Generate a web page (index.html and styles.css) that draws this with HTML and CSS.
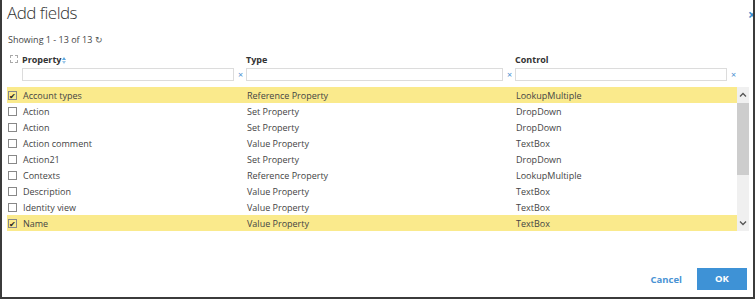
FILE: index.html
```html
<!DOCTYPE html>
<html>
<head>
<meta charset="utf-8">
<title>Add fields</title>
<link rel="stylesheet" href="styles.css">
</head>
<body>
    <div class="dialog">
        <div class="title">
            <h1>Add fields</h1>
            <span class="close">×</span>
        </div>
        <p class="count">Showing 1 - 13 of 13 <span class="refresh">↻</span></p>

        <!-- header begin -->
        <div class="row head">
            <span class="chk dotted"></span>
            <span class="col c1">Property<span class="sort"><b class="up"></b><b class="down"></b></span></span>
            <span class="col c2">Type</span>
            <span class="col c3">Control</span>
        </div>
        <div class="row filters">
            <span class="chk none"></span>
            <span class="col c1"><input type="text"><i>×</i></span>
            <span class="col c2"><input type="text"><i>×</i></span>
            <span class="col c3"><input type="text"><i>×</i></span>
        </div>
        <!-- header end -->

        <!-- list begin -->
        <div class="list">
            <div class="rows">
                <div class="row item on"><span class="chk">✔</span><span class="col c1">Account types</span><span class="col c2">Reference Property</span><span class="col c3">LookupMultiple</span></div>
                <div class="row item"><span class="chk"></span><span class="col c1">Action</span><span class="col c2">Set Property</span><span class="col c3">DropDown</span></div>
                <div class="row item"><span class="chk"></span><span class="col c1">Action</span><span class="col c2">Set Property</span><span class="col c3">DropDown</span></div>
                <div class="row item"><span class="chk"></span><span class="col c1">Action comment</span><span class="col c2">Value Property</span><span class="col c3">TextBox</span></div>
                <div class="row item"><span class="chk"></span><span class="col c1">Action21</span><span class="col c2">Set Property</span><span class="col c3">DropDown</span></div>
                <div class="row item"><span class="chk"></span><span class="col c1">Contexts</span><span class="col c2">Reference Property</span><span class="col c3">LookupMultiple</span></div>
                <div class="row item"><span class="chk"></span><span class="col c1">Description</span><span class="col c2">Value Property</span><span class="col c3">TextBox</span></div>
                <div class="row item"><span class="chk"></span><span class="col c1">Identity view</span><span class="col c2">Value Property</span><span class="col c3">TextBox</span></div>
                <div class="row item on"><span class="chk">✔</span><span class="col c1">Name</span><span class="col c2">Value Property</span><span class="col c3">TextBox</span></div>
            </div>
            <div class="scroll">
                <span class="arr">
                    <svg width="8" height="6" viewBox="0 0 8 6"><path d="M1 4.5 L4 1.5 L7 4.5" fill="none" stroke="#555" stroke-width="1.3"/></svg>
                </span>
                <span class="thumb"></span>
                <span class="track"></span>
                <span class="arr">
                    <svg width="8" height="6" viewBox="0 0 8 6"><path d="M1 1.5 L4 4.5 L7 1.5" fill="none" stroke="#555" stroke-width="1.3"/></svg>
                </span>
            </div>
        </div>
        <!-- list end -->

        <div class="foot">
            <a href="javascript:;" class="cancel">Cancel</a>
            <a href="javascript:;" class="ok">OK</a>
        </div>
    </div>
</body>
</html>
```

FILE: styles.css
```css
* { margin: 0; padding: 0; box-sizing: border-box; }
body { font-family: "Open Sans", "Liberation Sans", sans-serif; color: #444; background: #fff; }

.dialog { width: 755px; height: 299px; border: 2px solid #3b3b3b; border-top: none; padding: 0 0 0 5px; overflow: hidden; }

.title { display: flex; justify-content: space-between; align-items: flex-start; height: 34px; }
.title h1 { font-size: 17px; font-weight: 300; letter-spacing: -0.5px; color: #333; line-height: 24px; padding: 1px 0 0 0; }
.title .close { color: #3a8fd0; font-size: 14px; font-weight: bold; line-height: 14px; margin-top: 8px; margin-right: -3px; }

.count { font-size: 9px; line-height: 12px; padding-left: 1px; color: #444; height: 18px; }
.count .refresh { font-size: 9px; color: #555; }

.row { display: flex; align-items: center; font-size: 9px; }
.chk { width: 9px; height: 9px; border: 1px solid #888; margin: 0 6px 0 1px; font-size: 8px; line-height: 8px; text-align: center; color: #222; flex: none; }
.chk.dotted { border: 1px dashed #aaa; margin-left: 3px; margin-right: 4px; width: 8px; height: 8px; }
.chk.none { border: none; }
.col { flex: none; }
.c1 { width: 224px; }
.c2 { width: 269px; }
.c3 { width: 222px; }

.head { height: 14px; font-weight: bold; color: #333; }
.head .sort { display: inline-flex; flex-direction: column; gap: 1px; vertical-align: 3px; margin-left: 1px; }
.head .sort b { display: block; width: 0; height: 0; border-left: 2px solid transparent; border-right: 2px solid transparent; }
.head .sort .up { border-bottom: 3px solid #5aa7e0; }
.head .sort .down { border-top: 3px solid #9cc8ea; }

.filters { height: 16px; margin-bottom: 5px; }
.filters .col { display: flex; align-items: center; }
.filters input { height: 13px; border: 1px solid #dcdcdc; outline: none; margin-left: -1px; }
.filters .c1 input { width: 212px; }
.filters .c2 input { width: 257px; }
.filters .c3 input { width: 212px; }
.filters i { font-style: normal; color: #4a90d0; font-size: 9px; margin-left: 4px; }

.list { display: flex; width: 742px; height: 144px; }
.rows { width: 730px; }
.item { height: 16px; color: #444; }
.item.on { background: #faea8c; }

.scroll { width: 12px; background: #f0f0f0; display: flex; flex-direction: column; }
.scroll .arr { height: 16px; display: flex; align-items: center; justify-content: center; }
.scroll .thumb { height: 72px; background: #cdcdcd; }
.scroll .track { flex: 1; }

.foot { display: flex; justify-content: flex-end; align-items: center; margin-top: 37px; padding-right: 6px; }
.foot a { text-decoration: none; font-size: 9.5px; font-weight: bold; }
.foot .cancel { color: #4a93d4; margin-right: 15px; }
.foot .ok { display: block; width: 50px; height: 22px; line-height: 22px; text-align: center; background: #3e92d6; color: #fff; }
```
